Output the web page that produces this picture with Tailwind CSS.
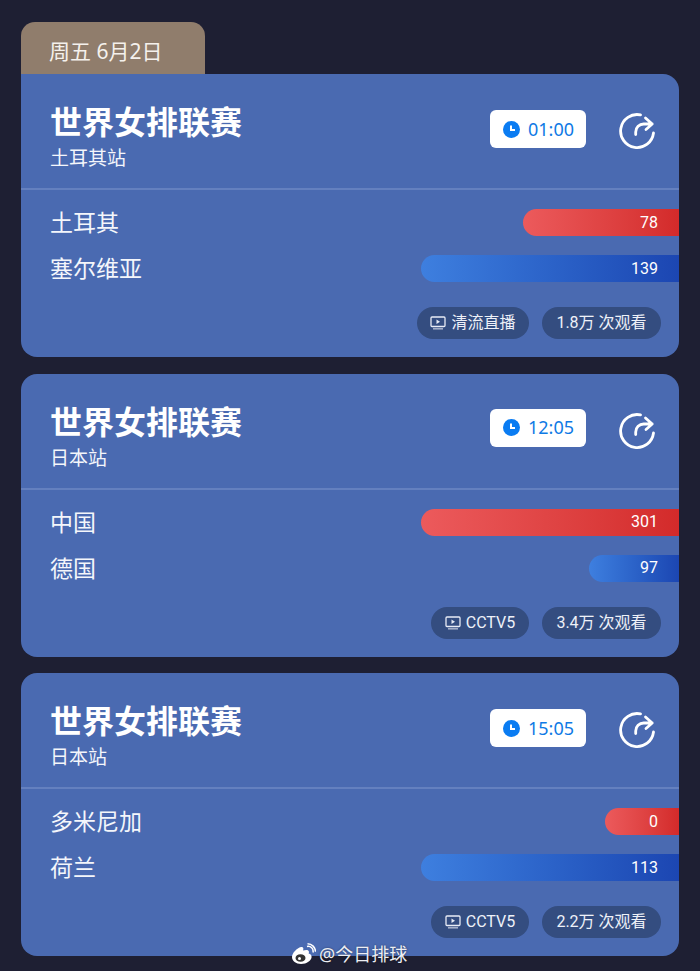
<!DOCTYPE html>
<html lang="zh"><head><meta charset="utf-8">
<script src="https://cdn.jsdelivr.net/npm/@tailwindcss/browser@4"></script>
</head>
<body class="m-0">
<div class="relative w-[700px] h-[971px] overflow-hidden bg-[#1e1f33] px-[21px] pt-[22px] text-white font-['Noto_Sans','Noto_Sans_CJK_SC',sans-serif]">
  <div class="w-[184px] h-[52px] rounded-t-[14px] bg-[#907d6c] pl-[28px] pt-[14px] text-[21px] leading-[30px] text-[#f5f1ec]">周五 6月2日</div>

  <div class="flex flex-col gap-[16.5px]">
  <section class="h-[283px] rounded-b-[16px] rounded-tr-[16px] bg-[#4a6ab1] flex flex-col">
    <header class="h-[116px] shrink-0 border-b-2 border-[#6480bf] flex pl-[29px] pr-[24px]">
      <div class="flex-1 pt-[28px]">
        <div class="text-[32px] leading-[40px] font-bold">世界女排联赛</div>
        <div class="text-[19px] leading-[24px] mt-[4px] text-[#f4f6fb]">土耳其站</div>
      </div>
      <div class="flex items-center w-[96px] h-[38px] mt-[36px] mr-[33px] rounded-[6px] bg-white pl-[13px] text-[#0f7ae5] text-[18px]">
        <svg class="w-[17px] h-[17px]" viewBox="0 0 17 17"><circle cx="8.5" cy="8.5" r="8.5" fill="#0a7cf2"/><path d="M8 4.5v4.500h4" fill="none" stroke="#fff" stroke-width="2"/></svg>
        <span class="ml-[8px]">01:00</span>
      </div>
      <svg class="w-[36px] h-[36px] mt-[39px]" viewBox="0 0 36 36" fill="none" stroke="#fff" stroke-width="2.800" stroke-linecap="round" stroke-linejoin="round"><path d="M34.500 20A16.500 16.500 0 1 1 21.500 1.900"/><path d="M16.700 21.500v-2.500a8 8 0 0 1 8-8h8.500M26.500 5l6.700 6-6.200 5.500"/></svg>
    </header>
    <div class="pl-[29px] pt-[19px] flex flex-col gap-[19px]">
      <div class="flex items-center h-[27px] text-[23px]"><span class="flex-1 text-[#f4f6fb]">土耳其</span><div class="w-[156px] h-[27px] rounded-l-full bg-gradient-to-r from-[#ec5a5c] to-[#d32a2a] flex items-center justify-end pr-[21px] text-[16px] font-['Roboto','Noto_Sans_CJK_SC',sans-serif]">78</div></div>
      <div class="flex items-center h-[27px] text-[23px]"><span class="flex-1 text-[#f4f6fb]">塞尔维亚</span><div class="w-[258px] h-[27px] rounded-l-full bg-gradient-to-r from-[#3e7fdf] to-[#1c46b2] flex items-center justify-end pr-[21px] text-[16px] font-['Roboto','Noto_Sans_CJK_SC',sans-serif]">139</div></div>
    </div>
    <div class="flex justify-end gap-[13px] pr-[18px] mt-[25px] text-[16px] text-[#eef1f8] font-['Roboto','Noto_Sans_CJK_SC',sans-serif]">
      <div class="h-[32px] w-[112px] rounded-full bg-[#344d80] flex items-center justify-center gap-[5px]"><svg class="w-[16px] h-[14px]" viewBox="0 0 16 14" fill="none"><rect x="1" y="1" width="14" height="9.500" rx="1" stroke="#e8ecf5" stroke-width="1.300"/><path d="M6.500 3.500l3.500 2.200-3.500 2.200z" fill="#e8ecf5"/><path d="M3 12.800h10" stroke="#aab4cc" stroke-width="1.500"/></svg><span>清流直播</span></div>
      <div class="h-[32px] w-[119px] rounded-full bg-[#344d80] flex items-center justify-center">1.8万 次观看</div>
    </div>
  </section>

  <section class="h-[283px] rounded-[16px] bg-[#4a6ab1] flex flex-col">
    <header class="h-[116px] shrink-0 border-b-2 border-[#6480bf] flex pl-[29px] pr-[24px]">
      <div class="flex-1 pt-[28px]">
        <div class="text-[32px] leading-[40px] font-bold">世界女排联赛</div>
        <div class="text-[19px] leading-[24px] mt-[4px] text-[#f4f6fb]">日本站</div>
      </div>
      <div class="flex items-center w-[96px] h-[38px] mt-[35px] mr-[33px] rounded-[6px] bg-white pl-[13px] text-[#0f7ae5] text-[18px]">
        <svg class="w-[17px] h-[17px]" viewBox="0 0 17 17"><circle cx="8.5" cy="8.5" r="8.5" fill="#0a7cf2"/><path d="M8 4.5v4.500h4" fill="none" stroke="#fff" stroke-width="2"/></svg>
        <span class="ml-[8px]">12:05</span>
      </div>
      <svg class="w-[36px] h-[36px] mt-[39px]" viewBox="0 0 36 36" fill="none" stroke="#fff" stroke-width="2.800" stroke-linecap="round" stroke-linejoin="round"><path d="M34.500 20A16.500 16.500 0 1 1 21.500 1.900"/><path d="M16.700 21.500v-2.500a8 8 0 0 1 8-8h8.500M26.500 5l6.700 6-6.200 5.500"/></svg>
    </header>
    <div class="pl-[29px] pt-[19px] flex flex-col gap-[19px]">
      <div class="flex items-center h-[27px] text-[23px]"><span class="flex-1 text-[#f4f6fb]">中国</span><div class="w-[258px] h-[27px] rounded-l-full bg-gradient-to-r from-[#ec5a5c] to-[#d32a2a] flex items-center justify-end pr-[21px] text-[16px] font-['Roboto','Noto_Sans_CJK_SC',sans-serif]">301</div></div>
      <div class="flex items-center h-[27px] text-[23px]"><span class="flex-1 text-[#f4f6fb]">德国</span><div class="w-[90px] h-[27px] rounded-l-full bg-gradient-to-r from-[#3e7fdf] to-[#1c46b2] flex items-center justify-end pr-[21px] text-[16px] font-['Roboto','Noto_Sans_CJK_SC',sans-serif]">97</div></div>
    </div>
    <div class="flex justify-end gap-[13px] pr-[18px] mt-[25px] text-[16px] text-[#eef1f8] font-['Roboto','Noto_Sans_CJK_SC',sans-serif]">
      <div class="h-[32px] w-[98px] rounded-full bg-[#344d80] flex items-center justify-center gap-[5px]"><svg class="w-[16px] h-[14px]" viewBox="0 0 16 14" fill="none"><rect x="1" y="1" width="14" height="9.500" rx="1" stroke="#e8ecf5" stroke-width="1.300"/><path d="M6.500 3.500l3.500 2.200-3.500 2.200z" fill="#e8ecf5"/><path d="M3 12.800h10" stroke="#aab4cc" stroke-width="1.500"/></svg><span>CCTV5</span></div>
      <div class="h-[32px] w-[119px] rounded-full bg-[#344d80] flex items-center justify-center">3.4万 次观看</div>
    </div>
  </section>

  <section class="h-[283px] rounded-[16px] bg-[#4a6ab1] flex flex-col">
    <header class="h-[116px] shrink-0 border-b-2 border-[#6480bf] flex pl-[29px] pr-[24px]">
      <div class="flex-1 pt-[28px]">
        <div class="text-[32px] leading-[40px] font-bold">世界女排联赛</div>
        <div class="text-[19px] leading-[24px] mt-[4px] text-[#f4f6fb]">日本站</div>
      </div>
      <div class="flex items-center w-[96px] h-[38px] mt-[36px] mr-[33px] rounded-[6px] bg-white pl-[13px] text-[#0f7ae5] text-[18px]">
        <svg class="w-[17px] h-[17px]" viewBox="0 0 17 17"><circle cx="8.5" cy="8.5" r="8.5" fill="#0a7cf2"/><path d="M8 4.5v4.500h4" fill="none" stroke="#fff" stroke-width="2"/></svg>
        <span class="ml-[8px]">15:05</span>
      </div>
      <svg class="w-[36px] h-[36px] mt-[39px]" viewBox="0 0 36 36" fill="none" stroke="#fff" stroke-width="2.800" stroke-linecap="round" stroke-linejoin="round"><path d="M34.500 20A16.500 16.500 0 1 1 21.500 1.900"/><path d="M16.700 21.500v-2.500a8 8 0 0 1 8-8h8.500M26.500 5l6.700 6-6.200 5.500"/></svg>
    </header>
    <div class="pl-[29px] pt-[19px] flex flex-col gap-[19px]">
      <div class="flex items-center h-[27px] text-[23px]"><span class="flex-1 text-[#f4f6fb]">多米尼加</span><div class="w-[74px] h-[27px] rounded-l-full bg-gradient-to-r from-[#ec5a5c] to-[#d32a2a] flex items-center justify-end pr-[21px] text-[16px] font-['Roboto','Noto_Sans_CJK_SC',sans-serif]">0</div></div>
      <div class="flex items-center h-[27px] text-[23px]"><span class="flex-1 text-[#f4f6fb]">荷兰</span><div class="w-[258px] h-[27px] rounded-l-full bg-gradient-to-r from-[#3e7fdf] to-[#1c46b2] flex items-center justify-end pr-[21px] text-[16px] font-['Roboto','Noto_Sans_CJK_SC',sans-serif]">113</div></div>
    </div>
    <div class="flex justify-end gap-[13px] pr-[18px] mt-[25px] text-[16px] text-[#eef1f8] font-['Roboto','Noto_Sans_CJK_SC',sans-serif]">
      <div class="h-[32px] w-[98px] rounded-full bg-[#344d80] flex items-center justify-center gap-[5px]"><svg class="w-[16px] h-[14px]" viewBox="0 0 16 14" fill="none"><rect x="1" y="1" width="14" height="9.500" rx="1" stroke="#e8ecf5" stroke-width="1.300"/><path d="M6.500 3.500l3.500 2.200-3.500 2.200z" fill="#e8ecf5"/><path d="M3 12.800h10" stroke="#aab4cc" stroke-width="1.500"/></svg><span>CCTV5</span></div>
      <div class="h-[32px] w-[119px] rounded-full bg-[#344d80] flex items-center justify-center">2.2万 次观看</div>
    </div>
  </section>
  </div>

  <div class="absolute left-[291px] top-[942px] flex items-center gap-[3px] text-[18px] leading-[24px] text-[#eceef4] [text-shadow:0_0_2px_rgba(0,0,0,0.5)]">
    <svg class="w-[25px] h-[22px]" viewBox="0 0 25 22"><path d="M1 14c0-4 5-9 9-10 2-.5 3 1 2 3.500 3-1 6-.8 6 1.500 0 .6-.2 1-.4 1.500 2 .6 3 1.700 3 3.500 0 3.500-5 7-10.500 7C5 21 1 18 1 14z" fill="#fff"/><ellipse cx="9.500" cy="15" rx="5" ry="3.800" fill="#333"/><circle cx="8.500" cy="15.500" r="1.500" fill="#fff"/><path d="M16 3.500a5 5 0 0 1 6 6M16.500 0.800a8 8 0 0 1 8 8" stroke="#fff" stroke-width="1.500" fill="none"/></svg>
    <span>@今日排球</span>
  </div>
</div>
</body></html>
